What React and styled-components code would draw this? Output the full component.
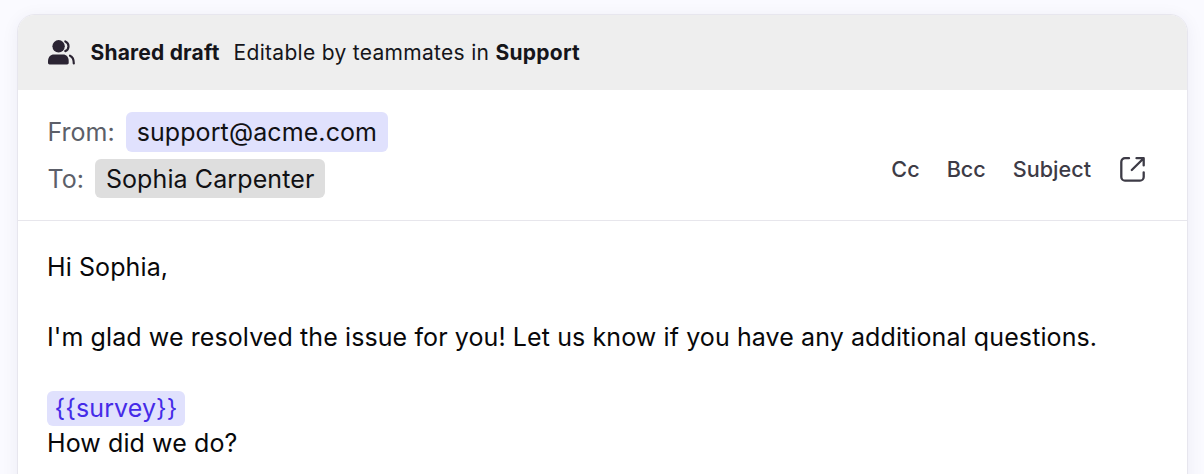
import React from 'react'
import styled, { createGlobalStyle } from 'styled-components';

const GlobalStyle = createGlobalStyle`
    body { margin: 0; background: #fafaff; font-family: Inter, "Liberation Sans", sans-serif; overflow: hidden; }
`

const Page = styled.main`box-sizing: border-box; height: 474px; padding: 14px 17px 0; overflow: hidden;`
const Card = styled.section`box-sizing: border-box; width: 1171px; height: 520px; background: #fff; border: 1px solid #e7e6ee; border-radius: 18px; overflow: hidden; box-shadow: 0 3px 18px rgba(40, 30, 90, 0.06);`

const Banner = styled.header`display: flex; align-items: center; box-sizing: border-box; height: 75px; padding: 0 30px; background: #eee; color: #15151a; font-size: 21px; line-height: 30px;`
const BannerTitle = styled.strong`margin: 0 14px 0 14.5px; font-weight: 650; letter-spacing: 0.2px;`
const BannerText = styled.span`letter-spacing: 0.3px; b { font-weight: 700; letter-spacing: 0.25px; }`

const Fields = styled.div`display: flex; justify-content: space-between; box-sizing: border-box; height: 131px; padding: 22px 41px 0 29px; border-bottom: 1px solid #e7e6ec;`
const Addresses = styled.div`display: flex; flex-direction: column; gap: 7px;`
const Row = styled.div`display: flex; align-items: center; gap: 12px; height: ${p => p.$height}px; padding-left: 0.5px; font-size: 25px; color: #5c5f69;`
const Chip = styled.span`display: flex; align-items: center; height: 100%; margin-left: -0.5px; padding: 0 10.5px; border-radius: 6px; background: ${p => p.$bg}; color: #111114; letter-spacing: 0.1px;`
const Actions = styled.div`display: flex; align-items: center; gap: 27px; height: 34px; margin-top: 40px;`
const Action = styled.button`padding: 0; border: none; background: none; font: 480 21.6px/30px Inter, sans-serif; color: #3d3b46;`

const Body = styled.div`padding: 29px; color: #08080a; font-size: 25px; line-height: 35.2px; letter-spacing: 0.1px;`
const Line = styled.p`min-height: 35.2px; margin: 0; white-space: nowrap;`
const Token = styled.span`display: inline-block; padding: 0 7.5px; border-radius: 6px; background: #e0e1fd; color: #452be8;`

const TeamIcon = () => (
    <svg width="28" height="25" viewBox="0 0 28 25" fill="#2b2433">
        <circle cx="10.6" cy="6.300" r="6.200" />
        <path d="M0 21.500C0 17 2.500 14.600 6 14.600h9c3.500 0 5.700 2.400 5.700 6.900v1.300c0 1-.6 1.600-1.600 1.600H1.600c-1 0-1.600-.6-1.600-1.600Z" />
        <path d="M17.300 1.500q3.200 1.200 3.200 4.800t-3.200 4.800M22 15.700q3.800 1.600 3.800 7.700" fill="none" stroke="#2b2433" strokeWidth="2.200" strokeLinecap="round" />
    </svg>
)

const OpenIcon = () => (
    <svg width="28" height="28" viewBox="0 0 28 28" fill="none" stroke="#3d3b46" strokeWidth="2.300" strokeLinecap="round" strokeLinejoin="round">
        <path d="M11 3.200H7a3.700 3.700 0 0 0-3.700 3.700v15A3.700 3.700 0 0 0 7 25.600h15a3.700 3.700 0 0 0 3.700-3.700v-4.600M18.500 3.200h7.200v7.200M25.700 3.200 13.800 15" />
    </svg>
)

const App = () => {
    return (
        <Page>
            <GlobalStyle />
            <Card>
                <Banner>
                    <TeamIcon />
                    <BannerTitle>Shared draft</BannerTitle>
                    <BannerText>Editable by teammates in <b>Support</b></BannerText>
                </Banner>
                <Fields>
                    <Addresses>
                        <Row $height={40}>From: <Chip $bg="#e0e1fd">support@acme.com</Chip></Row>
                        <Row $height={39}>To: <Chip $bg="#dedede">Sophia Carpenter</Chip></Row>
                    </Addresses>
                    <Actions>
                        <Action>Cc</Action>
                        <Action>Bcc</Action>
                        <Action>Subject</Action>
                        <OpenIcon />
                    </Actions>
                </Fields>
                <Body>
                    <Line>Hi Sophia,</Line>
                    <Line />
                    <Line>I'm glad we resolved the issue for you! Let us know if you have any additional questions.</Line>
                    <Line />
                    <Line><Token>{'{{survey}}'}</Token></Line>
                    <Line>How did we do?</Line>
                </Body>
            </Card>
        </Page>
    )
}
export default App;
